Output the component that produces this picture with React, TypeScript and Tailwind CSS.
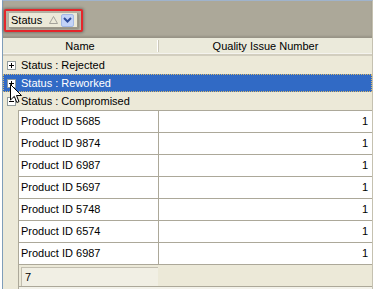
import React from 'react';

const products = [
    { id: 'Product ID 5685', qty: 1 },
    { id: 'Product ID 9874', qty: 1 },
    { id: 'Product ID 6987', qty: 1 },
    { id: 'Product ID 5697', qty: 1 },
    { id: 'Product ID 5748', qty: 1 },
    { id: 'Product ID 6574', qty: 1 },
    { id: 'Product ID 6987', qty: 1 },
];

const groups = [
    { label: 'Status : Rejected', expanded: false, selected: false },
    { label: 'Status : Reworked', expanded: false, selected: true },
    { label: 'Status : Compromised', expanded: true, selected: false },
];

const ExpandBox = ({ expanded }: { expanded: boolean }) => (
    <svg width="9" height="9" viewBox="0 0 9 9" className="shrink-0">
        <rect x="0.5" y="0.5" width="8" height="8" fill="#ffffff" stroke="#919b9c" />
        <line x1="2" y1="4.5" x2="7" y2="4.5" stroke="#000000" />
        {!expanded && <line x1="4.5" y1="2" x2="4.5" y2="7" stroke="#000000" />}
    </svg>
);

const App = () => {
    return (
        <div className="relative w-[375px] h-[289px] overflow-hidden bg-white font-['Liberation_Sans',Arial,sans-serif] text-[11px] text-black">
            <div className="ml-[2px] w-[371px] h-[289px] flex flex-col border-l border-t border-r border-l-[#7f9db9] border-t-[#9fb3cc] border-r-[#c5c1b0] bg-[#ece9d8]">
                {/* group by panel */}
                <div className="h-[37px] shrink-0 bg-[#aca899] pl-[1px] pt-[8px] shadow-[inset_0_-2px_2px_rgba(0,0,0,0.12)]">
                    <div className="w-[79px] h-[23px] border-2 border-[#e5262b] rounded-[2px] px-[3px] py-[2px] shadow-[0_0_3px_1px_rgba(0,0,0,0.3)] bg-[#b5b1a3]">
                        <div className="h-[15px] w-full flex items-center bg-[#ece9d8] border-r border-b border-[#9d998a] pl-[2px] shadow-[1px_1px_2px_rgba(0,0,0,0.25)]">
                            <span className="leading-none">Status</span>
                            <svg width="9" height="8" viewBox="0 0 9 8" className="ml-[7px]">
                                <polygon points="4.5,0.5 8.5,7.5 0.5,7.5" fill="none" stroke="#a5a29a" />
                            </svg>
                            <div className="ml-[3px] w-[13px] h-[13px] flex items-center justify-center bg-[#c3d3f8] border border-[#a4b9e6] rounded-[2px]">
                                <svg width="9" height="6" viewBox="0 0 9 6">
                                    <polyline points="1,1 4.5,4.5 8,1" fill="none" stroke="#2d4c9c" strokeWidth="2" />
                                </svg>
                            </div>
                        </div>
                    </div>
                </div>

                {/* column headers */}
                <div className="h-[18px] shrink-0 flex items-center bg-[#ebeadb] border-b-2 border-[#d2cebf] shadow-[inset_0_-1px_0_#f4f3ee]">
                    <div className="w-[154px] text-center leading-none">Name</div>
                    <div className="w-[2px] h-[12px] border-l border-white border-r border-r-[#cbc7b8]" />
                    <div className="flex-1 text-center leading-none">Quality Issue Number</div>
                </div>

                {/* group rows */}
                {groups.map((g) => (
                    <div
                        key={g.label}
                        className={
                            g.selected
                                ? 'h-[18px] shrink-0 flex items-center pl-[4px] gap-[5px] bg-[#316ac5] text-white outline-1 outline-dotted outline-[#d9b96a] -outline-offset-1'
                                : 'h-[18px] shrink-0 flex items-center pl-[4px] gap-[5px] bg-[#ece9d8]'
                        }
                    >
                        <ExpandBox expanded={g.expanded} />
                        <span className="leading-none">{g.label}</span>
                    </div>
                ))}

                {/* detail rows */}
                <div className="flex flex-1">
                    <div className="w-[15px] shrink-0 bg-[#ece9d8]" />
                    <div className="flex-1 flex flex-col border-l border-[#aca899]">
                        {products.map((p, i) => (
                            <div key={i} className="h-[22px] shrink-0 flex border-t border-[#aca899] bg-white">
                                <div className="w-[140px] flex items-center pl-[2px] border-r border-[#aca899]">{p.id}</div>
                                <div className="flex-1 flex items-center justify-end pr-[4px]">{p.qty}</div>
                            </div>
                        ))}
                        <div className="h-[23px] shrink-0 flex border-t border-b border-[#aca899] bg-[#ece9d8]">
                            <div className="ml-[2px] mt-[2px] w-[137px] flex items-center pl-[3px] bg-[#f1efe4] border-t border-l border-[#c2beb0]">7</div>
                        </div>
                        <div className="flex-1 bg-[#f3f2ea]" />
                    </div>
                </div>
            </div>

            {/* mouse pointer */}
            <svg width="13" height="20" viewBox="0 0 13 20" className="absolute left-[10px] top-[84px]">
                <path d="M0.5 0.5 L0.5 16 L4.3 12.3 L6.8 18.5 L9 17.6 L6.5 11.5 L11.5 11.5 Z" fill="#ffffff" stroke="#000000" strokeLinejoin="miter" />
            </svg>
        </div>
    );
};

export default App;
